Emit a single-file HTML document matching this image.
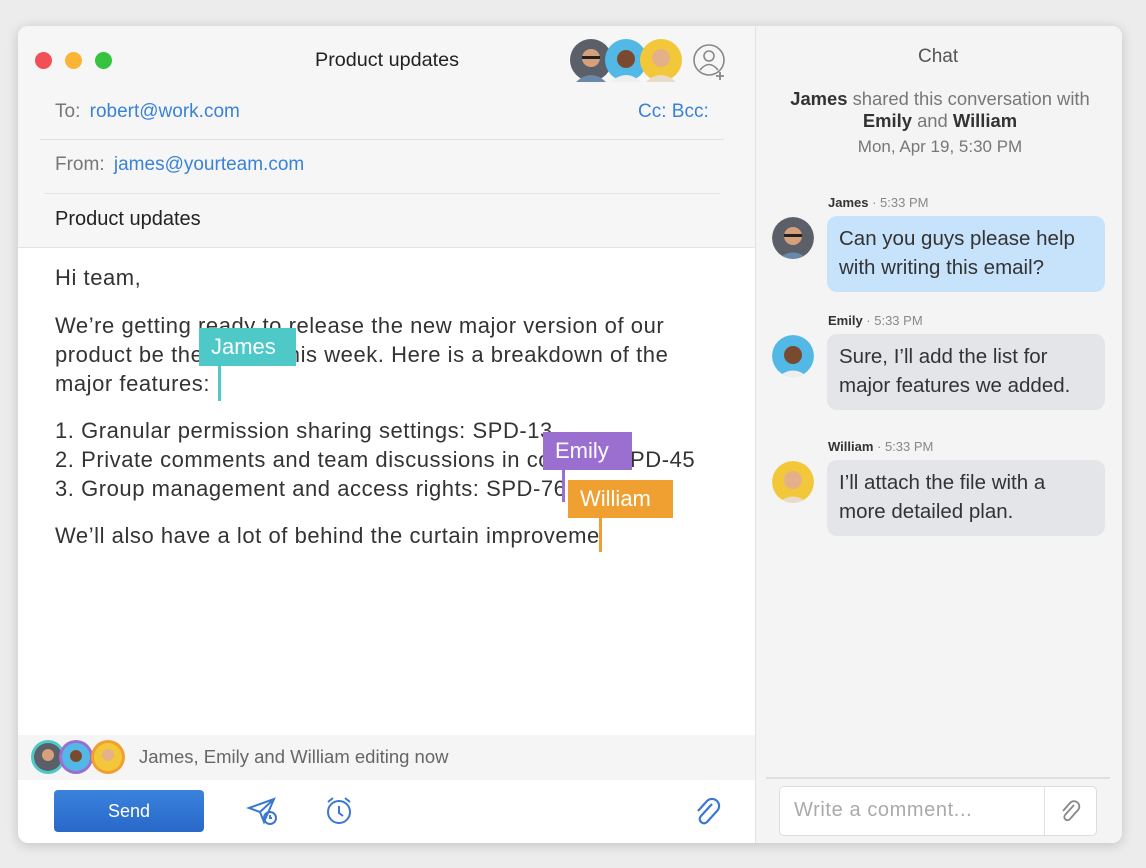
<!DOCTYPE html>
<html><head><style>
*{margin:0;padding:0;box-sizing:border-box}
body{width:1146px;height:868px;background:#ececec;font-family:"Liberation Sans",sans-serif;position:relative;overflow:hidden}
.a{position:absolute}
.win{left:18px;top:26px;width:1104px;height:817px;border-radius:10px;overflow:hidden;background:#fff;box-shadow:0 2px 12px rgba(0,0,0,.18)}
.body{font-size:22px;letter-spacing:0.55px;color:#333;line-height:29px}
.av{position:absolute;border-radius:50%;overflow:hidden}
.tag{position:absolute;color:#fff;font-size:22px;padding:0 12px;height:38px;line-height:38px}
.bub{position:absolute;left:827px;width:278px;border-radius:10px;font-size:20.5px;line-height:29px;color:#333;padding:8px 12px}
.nm{position:absolute;left:828px;font-size:13px;color:#888}
.nm b{color:#333}
</style></head><body>
<div class="a win">
 <div class="a" style="left:0;top:0;width:737px;height:222px;background:#f6f6f6;border-bottom:1px solid #e4e4e4"></div>
 <div class="a" style="left:737px;top:0;width:367px;height:817px;background:#f4f4f4;border-left:1px solid #e2e2e2"></div>
</div>
<div class="a" style="left:35px;top:52px;width:17px;height:17px;border-radius:50%;background:#f25056"></div>
<div class="a" style="left:65px;top:52px;width:17px;height:17px;border-radius:50%;background:#fbb434"></div>
<div class="a" style="left:95px;top:52px;width:17px;height:17px;border-radius:50%;background:#37c23f"></div>
<div class="a" style="left:315px;top:49px;font-size:19.8px;color:#222">Product updates</div>
<svg class="a" style="left:568px;top:38px" width="120" height="44">
<circle cx="23" cy="22" r="21" fill="#5b6068"/><circle cx="23" cy="20" r="9" fill="#d6a07a"/><rect x="14" y="18" width="18" height="3" fill="#222"/><path d="M8 44 Q23 30 38 44Z" fill="#6a88a8"/>
<circle cx="58" cy="22" r="21" fill="#52b9e6"/><circle cx="58" cy="21" r="9" fill="#7a4a30"/><path d="M43 44 Q58 30 73 44Z" fill="#eee"/>
<circle cx="93" cy="22" r="21" fill="#f2c83a"/><circle cx="93" cy="20" r="9" fill="#e4b08a"/><path d="M78 44 Q93 30 108 44Z" fill="#e8dcc8"/>
</svg>
<svg class="a" style="left:692px;top:44px" width="36" height="36" fill="none" stroke="#888" stroke-width="1.6"><circle cx="17" cy="16" r="15"/><circle cx="17" cy="12" r="5"/><path d="M8 26 Q17 15 26 26"/><path d="M28 28v8M24 32h8" stroke-width="1.8"/></svg>
<div class="a" style="left:55px;top:101px;font-size:19px;color:#777">To: <span style="color:#3a82d8;margin-left:4px">robert@work.com</span></div>
<div class="a" style="left:638px;top:101px;font-size:19px;color:#3a82d8">Cc: Bcc:</div>
<div class="a" style="left:40px;top:139px;width:684px;height:1px;background:#e0e0e0"></div>
<div class="a" style="left:55px;top:154px;font-size:19px;color:#777">From: <span style="color:#3a82d8;margin-left:4px">james@yourteam.com</span></div>
<div class="a" style="left:44px;top:193px;width:676px;height:1px;background:#e4e4e4"></div>
<div class="a" style="left:55px;top:208px;font-size:20px;color:#222">Product updates</div>

<div class="a body" style="left:55px;top:263px">Hi team,</div>
<div class="a body" style="left:55px;top:311px;white-space:nowrap">We’re getting ready to release the new major version of our<br>product be the end of this week. Here is a breakdown of the<br>major features:</div>
<div class="a body" style="left:55px;top:416px;white-space:nowrap">1. Granular permission sharing settings: SPD-13<br>2. Private comments and team discussions in context: SPD-45<br>3. Group management and access rights: SPD-76</div>
<div class="a body" style="left:55px;top:521px;white-space:nowrap">We’ll also have a lot of behind the curtain improveme</div>

<div class="tag" style="left:199px;top:328px;width:97px;background:#4fc8c8">James</div>
<div class="a" style="left:218px;top:366px;width:3px;height:35px;background:#4fc8c8"></div>
<div class="tag" style="left:543px;top:432px;width:89px;background:#9b6fd0">Emily</div>
<div class="a" style="left:562px;top:470px;width:3px;height:32px;background:#9b6fd0"></div>
<div class="tag" style="left:568px;top:480px;width:105px;background:#f0a030">William</div>
<div class="a" style="left:599px;top:518px;width:3px;height:34px;background:#f0a030"></div>

<div class="a" style="left:18px;top:735px;width:737px;height:45px;background:#f5f5f5"></div>
<svg class="a" style="left:30px;top:738px" width="100" height="38">
<circle cx="18" cy="19" r="17" fill="#4fc8c8"/><circle cx="18" cy="19" r="14" fill="#5b6068"/><circle cx="18" cy="17" r="6" fill="#d6a07a"/>
<circle cx="46" cy="19" r="17" fill="#9b6fd0"/><circle cx="46" cy="19" r="14" fill="#52b9e6"/><circle cx="46" cy="18" r="6" fill="#7a4a30"/>
<circle cx="78" cy="19" r="17" fill="#f0a030"/><circle cx="78" cy="19" r="14" fill="#f2c83a"/><circle cx="78" cy="17" r="6" fill="#e4b08a"/>
</svg>
<div class="a" style="left:139px;top:746px;font-size:18.5px;color:#666">James, Emily and William editing now</div>
<div class="a" style="left:54px;top:790px;width:150px;height:42px;border-radius:4px;background:linear-gradient(#3b82de,#2868c8);color:#fff;font-size:18px;text-align:center;line-height:42px">Send</div>
<svg class="a" style="left:246px;top:796px" width="36" height="32" fill="none" stroke="#3a78d0" stroke-width="2"><path d="M3 12 L28 3 L18 26 L14 16Z M14 16 L28 3"/><circle cx="24" cy="22" r="6"/><path d="M24 19v3h2"/></svg>
<svg class="a" style="left:324px;top:795px" width="32" height="32" fill="none" stroke="#3a78d0" stroke-width="2"><circle cx="15" cy="17" r="11"/><path d="M15 11v7l4 3M4 7l5-4M26 7l-5-4"/></svg>
<svg class="a" style="left:694px;top:796px" width="28" height="30" fill="none" stroke="#3a78d0" stroke-width="2.2"><path d="M18 8 L7 20 a4 4 0 0 0 6 6 L23 15 a7 7 0 0 0 -10 -10 L4 15"/></svg>

<div class="a" style="left:918px;top:46px;font-size:19px;color:#555">Chat</div>
<div class="a" style="left:755px;top:88px;width:370px;text-align:center;font-size:18.4px;color:#777;line-height:22px"><b style="color:#333">James</b> shared this conversation with<br><b style="color:#333">Emily</b> and <b style="color:#333">William</b></div>
<div class="a" style="left:755px;top:137px;width:370px;text-align:center;font-size:17px;color:#777">Mon, Apr 19, 5:30 PM</div>

<div class="nm" style="top:195px"><b>James</b> · 5:33 PM</div>
<svg class="av" style="left:772px;top:217px" width="42" height="42"><circle cx="21" cy="21" r="21" fill="#5b6068"/><circle cx="21" cy="19" r="9" fill="#d6a07a"/><rect x="12" y="17" width="18" height="3" fill="#222"/><path d="M6 42 Q21 29 36 42Z" fill="#6a88a8"/></svg>
<div class="bub" style="top:216px;height:76px;background:#c7e3fb">Can you guys please help<br>with writing this email?</div>
<div class="nm" style="top:313px"><b>Emily</b> · 5:33 PM</div>
<svg class="av" style="left:772px;top:335px" width="42" height="42"><circle cx="21" cy="21" r="21" fill="#52b9e6"/><circle cx="21" cy="20" r="9" fill="#7a4a30"/><path d="M6 42 Q21 29 36 42Z" fill="#eee"/></svg>
<div class="bub" style="top:334px;height:76px;background:#e3e5e8">Sure, I’ll add the list for<br>major features we added.</div>
<div class="nm" style="top:439px"><b>William</b> · 5:33 PM</div>
<svg class="av" style="left:772px;top:461px" width="42" height="42"><circle cx="21" cy="21" r="21" fill="#f2c83a"/><circle cx="21" cy="19" r="9" fill="#e4b08a"/><path d="M6 42 Q21 29 36 42Z" fill="#e8dcc8"/></svg>
<div class="bub" style="top:460px;height:76px;background:#e3e5e8">I’ll attach the file with a<br>more detailed plan.</div>

<div class="a" style="left:766px;top:777px;width:344px;height:2px;background:#e0e0e0"></div>
<div class="a" style="left:779px;top:786px;width:318px;height:50px;background:#fff;border:1px solid #ddd;border-radius:5px"></div>
<div class="a" style="left:1044px;top:787px;width:1px;height:48px;background:#e2e2e2"></div>
<div class="a" style="left:794px;top:799px;font-size:20px;letter-spacing:0.6px;color:#aaa">Write a comment...</div>
<svg class="a" style="left:1060px;top:799px" width="22" height="24" fill="none" stroke="#888" stroke-width="1.8"><path d="M14 6 L5 16 a3 3 0 0 0 5 4 L18 11 a5 5 0 0 0 -8 -7 L3 12"/></svg>
</body></html>
